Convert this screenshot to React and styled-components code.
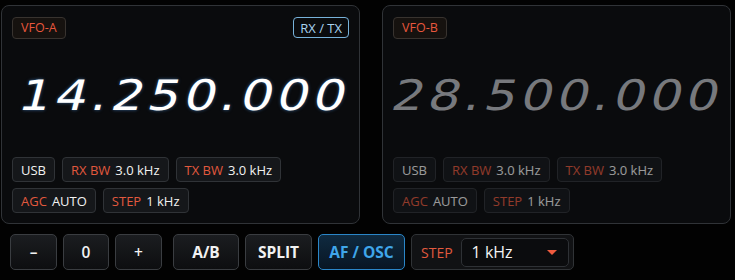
import React from "react";
import styled, { createGlobalStyle, css } from "styled-components";

const GlobalStyle = createGlobalStyle`
  html, body {
    margin: 0;
    padding: 0;
    background: #020202;
  }
  body {
    font-family: "Open Sans", "Noto Sans", sans-serif;
    color: #f2f2f2;
  }
`;

const Screen = styled.div`
  width: 735px;
  height: 280px;
  padding: 5px 0 0 1px;
  box-sizing: border-box;
  display: flex;
  flex-direction: column;
  gap: 10px;
`;

const PanelRow = styled.div`
  display: flex;
  gap: 22px;
`;

const Panel = styled.div`
  width: ${(p) => p.$width}px;
  height: 219px;
  box-sizing: border-box;
  padding: 10px;
  background: #0a0b0d;
  border: 1px solid #303337;
  border-radius: 8px;
  display: flex;
  flex-direction: column;
`;

const PanelHead = styled.div`
  display: flex;
  justify-content: space-between;
  align-items: center;
  height: 23px;
`;

const VfoBadge = styled.div`
  height: 22px;
  padding: 0 8px;
  box-sizing: border-box;
  display: flex;
  align-items: center;
  font-size: 12.5px;
  color: #e8573d;
  background: #16120f;
  border: 1px solid #38332f;
  border-radius: 4px;
`;

const RxTxBadge = styled.div`
  height: 21px;
  padding: 0 6px;
  box-sizing: border-box;
  display: flex;
  align-items: center;
  font-size: 13px;
  color: #a9d3ef;
  border: 1px solid #77b2da;
  border-radius: 4px;
`;

const FreqWrap = styled.div`
  height: 100px;
  padding: 14px 0 0 ${(p) => p.$indent}px;
  box-sizing: border-box;
  display: flex;
  align-items: center;
`;

const Freq = styled.div`
  font-family: "DejaVu Sans", sans-serif;
  font-size: 42px;
  line-height: 1;
  letter-spacing: 3.5px;
  white-space: nowrap;
  transform-origin: left center;
  transform: scaleX(1.2) skewX(-12deg);
  ${(p) =>
    p.$active
      ? css`
          color: #ffffff;
          text-shadow: 0 0 3px rgba(90, 170, 255, 0.55);
        `
      : css`
          color: #77797d;
        `}
`;

const Chips = styled.div`
  margin-top: auto;
  display: flex;
  flex-direction: column;
  gap: 6px;
  opacity: ${(p) => (p.$dim ? 0.62 : 1)};
`;

const ChipRow = styled.div`
  display: flex;
  gap: 7px;
`;

const Chip = styled.div`
  height: 25px;
  padding: 0 8px;
  box-sizing: border-box;
  display: flex;
  align-items: center;
  gap: 5px;
  font-size: 13px;
  background: #15171a;
  border: 1px solid #303337;
  border-radius: 4px;
`;

const ChipLabel = styled.span`
  color: #e2593e;
`;

const ChipValue = styled.span`
  color: #f2f2f2;
`;

const Controls = styled.div`
  display: flex;
  align-items: center;
  padding-left: 9px;
  gap: 6px;
`;

const Button = styled.button`
  width: ${(p) => p.$w}px;
  height: 36px;
  margin-left: ${(p) => p.$ml || 0}px;
  padding: 0;
  box-sizing: border-box;
  font-family: "Open Sans", "Noto Sans", sans-serif;
  font-size: 15.5px;
  font-weight: ${(p) => (p.$bold ? 700 : 600)};
  color: #f2f2f2;
  background: linear-gradient(#1b1d20, #0d0e10);
  border: 1px solid #3a3d41;
  border-radius: 5px;
  display: flex;
  align-items: center;
  justify-content: center;
  ${(p) =>
    p.$active &&
    css`
      color: #3fa6ea;
      background: linear-gradient(#0f2a40, #081624);
      border-color: #2a86c8;
    `}
`;

const StepGroup = styled.div`
  width: 163px;
  height: 36px;
  box-sizing: border-box;
  padding: 0 4px 0 9px;
  display: flex;
  align-items: center;
  gap: 8px;
  background: #111214;
  border: 1px solid #303336;
  border-radius: 5px;
`;

const StepLabel = styled.span`
  font-size: 14px;
  color: #e2593e;
`;

const Select = styled.div`
  flex: 1;
  height: 29px;
  box-sizing: border-box;
  padding: 0 10px;
  display: flex;
  align-items: center;
  justify-content: space-between;
  font-size: 16px;
  color: #f4f4f4;
  background: #0b0c0e;
  border: 1px solid #2e3135;
  border-radius: 5px;
`;

const Caret = styled.span`
  width: 0;
  height: 0;
  border-left: 5px solid transparent;
  border-right: 5px solid transparent;
  border-top: 5px solid #ef5b3f;
  margin-right: 1px;
`;

const VfoPanel = ({ name, freq, active, width, indent, rxtx }) => (
  <Panel $width={width}>
    <PanelHead>
      <VfoBadge>{name}</VfoBadge>
      {rxtx && <RxTxBadge>RX / TX</RxTxBadge>}
    </PanelHead>
    <FreqWrap $indent={indent}>
      <Freq $active={active}>{freq}</Freq>
    </FreqWrap>
    <Chips $dim={!active}>
      <ChipRow>
        <Chip>
          <ChipValue>USB</ChipValue>
        </Chip>
        <Chip>
          <ChipLabel>RX BW</ChipLabel>
          <ChipValue>3.0 kHz</ChipValue>
        </Chip>
        <Chip>
          <ChipLabel>TX BW</ChipLabel>
          <ChipValue>3.0 kHz</ChipValue>
        </Chip>
      </ChipRow>
      <ChipRow>
        <Chip>
          <ChipLabel>AGC</ChipLabel>
          <ChipValue>AUTO</ChipValue>
        </Chip>
        <Chip>
          <ChipLabel>STEP</ChipLabel>
          <ChipValue>1 kHz</ChipValue>
        </Chip>
      </ChipRow>
    </Chips>
  </Panel>
);

export default function App() {
  return (
    <>
      <GlobalStyle />
      <Screen>
        <PanelRow>
          <VfoPanel name="VFO-A" freq="14.250.000" active width={359} indent={8} rxtx />
          <VfoPanel name="VFO-B" freq="28.500.000" width={349} indent={0} />
        </PanelRow>
        <Controls>
          <Button $w={47}>–</Button>
          <Button $w={46}>0</Button>
          <Button $w={47}>+</Button>
          <Button $w={66} $ml={5} $bold>A/B</Button>
          <Button $w={67} $bold>SPLIT</Button>
          <Button $w={87} $bold $active>AF / OSC</Button>
          <StepGroup>
            <StepLabel>STEP</StepLabel>
            <Select>
              1 kHz
              <Caret />
            </Select>
          </StepGroup>
        </Controls>
      </Screen>
    </>
  );
}
